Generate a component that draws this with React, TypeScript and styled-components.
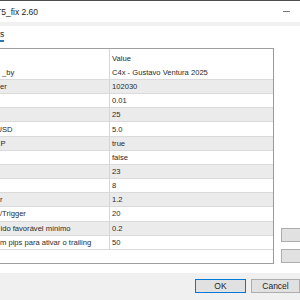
import React from "react";
import styled, { createGlobalStyle } from "styled-components";

const Global = createGlobalStyle`
  html, body { margin: 0; padding: 0; }
  body { width: 300px; height: 300px; overflow: hidden; background: #f0f0f0; }
  #root { width: 300px; height: 300px; }
`;

const Dialog = styled.div`
  width: 300px;
  height: 300px;
  display: flex;
  flex-direction: column;
  background: #f0f0f0;
  font-family: "Liberation Sans", Arial, sans-serif;
  color: #1e1e1e;
  overflow: hidden;
`;

const TitleBar = styled.div`
  height: 21px;
  flex: none;
  border-top: 1px solid #4d4d4d;
  background: #ffffff;
  display: flex;
  align-items: center;
  justify-content: space-between;
  overflow: hidden;
`;

const TitleText = styled.span`
  font-size: 8.5px;
  white-space: nowrap;
  margin-left: -4px;
  margin-top: 1px;
`;

const Minimize = styled.span`
  width: 7px;
  height: 1px;
  background: #777;
  margin-right: 10px;
`;

const Band = styled.div`
  height: 4px;
  flex: none;
  background: #f0f0f0;
`;

const TabPage = styled.div`
  height: 247px;
  flex: none;
  background: #ffffff;
  display: flex;
  flex-direction: column;
`;

const TabStrip = styled.div`
  height: 22px;
  flex: none;
  display: flex;
  align-items: flex-start;
`;

const TabLabel = styled.span`
  font-size: 8.5px;
  margin-top: 3px;
  line-height: 10px;
  padding-bottom: 1px;
  border-bottom: 2px solid #2a78b4;
`;

const Content = styled.div`
  display: flex;
  height: 216px;
`;

const Table = styled.div`
  width: 274px;
  height: 216px;
  box-sizing: border-box;
  border-top: 1px solid #a0a0a0;
  border-right: 1px solid #9a9a9a;
  border-bottom: 1px solid #a0a0a0;
  display: flex;
  flex-direction: column;
  font-size: 7.6px;
  color: #2a2a2a;
  flex: none;
`;

const Row = styled.div<{ $alt?: boolean; $header?: boolean }>`
  display: grid;
  grid-template-columns: 110px 1fr;
  height: ${(p) => (p.$header ? "16.83px" : "14.17px")};
  box-sizing: border-box;
  border-bottom: ${(p) => (p.$header ? "none" : "1px solid #dadada")};
  background: ${(p) => (p.$alt ? "#ebebeb" : "#ffffff")};
  flex: none;
`;

const NameCell = styled.div`
  border-right: 1px solid #d6d6d6;
  overflow: hidden;
  white-space: nowrap;
  display: flex;
  align-items: center;
`;

const NameText = styled.span<{ $shift: number }>`
  margin-left: ${(p) => p.$shift}px;
`;

const ValueCell = styled.div<{ $header?: boolean }>`
  padding-left: 2px;
  white-space: nowrap;
  display: flex;
  align-items: center;
  padding-top: ${(p) => (p.$header ? "2px" : "0")};
`;

const Side = styled.div`
  flex: 1;
  display: flex;
  flex-direction: column;
  justify-content: flex-end;
  align-items: flex-end;
  gap: 7px;
  padding-bottom: 1px;
`;

const SideButton = styled.div`
  width: 19px;
  height: 14px;
  box-sizing: border-box;
  background: #e1e1e1;
  border: 1px solid #adadad;
  border-right: none;
`;

const Footer = styled.div`
  flex: 1;
  display: flex;
  justify-content: flex-end;
  align-items: flex-start;
  padding-top: 6px;
  gap: 5px;
`;

const Button = styled.div<{ $primary?: boolean; $w: number }>`
  width: ${(p) => p.$w}px;
  height: 14px;
  box-sizing: border-box;
  background: #e1e1e1;
  border: 1px solid ${(p) => (p.$primary ? "#0078d7" : "#adadad")};
  font-size: 8.5px;
  display: flex;
  align-items: center;
  justify-content: center;
`;

type Param = { name: string; shift: number; value: string };

const params: Param[] = [
  { name: "_by", shift: 2, value: "C4x - Gustavo Ventura 2025" },
  { name: "er", shift: 0, value: "102030" },
  { name: "", shift: 0, value: "0.01" },
  { name: "", shift: 0, value: "25" },
  { name: "USD", shift: -3.5, value: "5.0" },
  { name: "P", shift: 0.5, value: "true" },
  { name: "", shift: 0, value: "false" },
  { name: "", shift: 0, value: "23" },
  { name: "", shift: 0, value: "8" },
  { name: "r", shift: 0, value: "1.2" },
  { name: "/Trigger", shift: 0, value: "20" },
  { name: "ido favorável mínimo", shift: 0.5, value: "0.2" },
  { name: "m pips para ativar o trailing", shift: 0, value: "50" },
];

export default function App() {
  return (
    <>
      <Global />
      <Dialog>
        <TitleBar>
          <TitleText>T5_fix 2.60</TitleText>
          <Minimize />
        </TitleBar>
        <Band />
        <TabPage>
          <TabStrip>
            <TabLabel>s</TabLabel>
          </TabStrip>
          <Content>
            <Table>
              <Row $header>
                <NameCell />
                <ValueCell $header>Value</ValueCell>
              </Row>
              {params.map((p, i) => (
                <Row key={i} $alt={i % 2 === 1}>
                  <NameCell>
                    <NameText $shift={p.shift}>{p.name}</NameText>
                  </NameCell>
                  <ValueCell>{p.value}</ValueCell>
                </Row>
              ))}
            </Table>
            <Side>
              <SideButton />
              <SideButton />
            </Side>
          </Content>
        </TabPage>
        <Footer>
          <Button $primary $w={51}>OK</Button>
          <Button $w={49}>Cancel</Button>
        </Footer>
      </Dialog>
    </>
  );
}
